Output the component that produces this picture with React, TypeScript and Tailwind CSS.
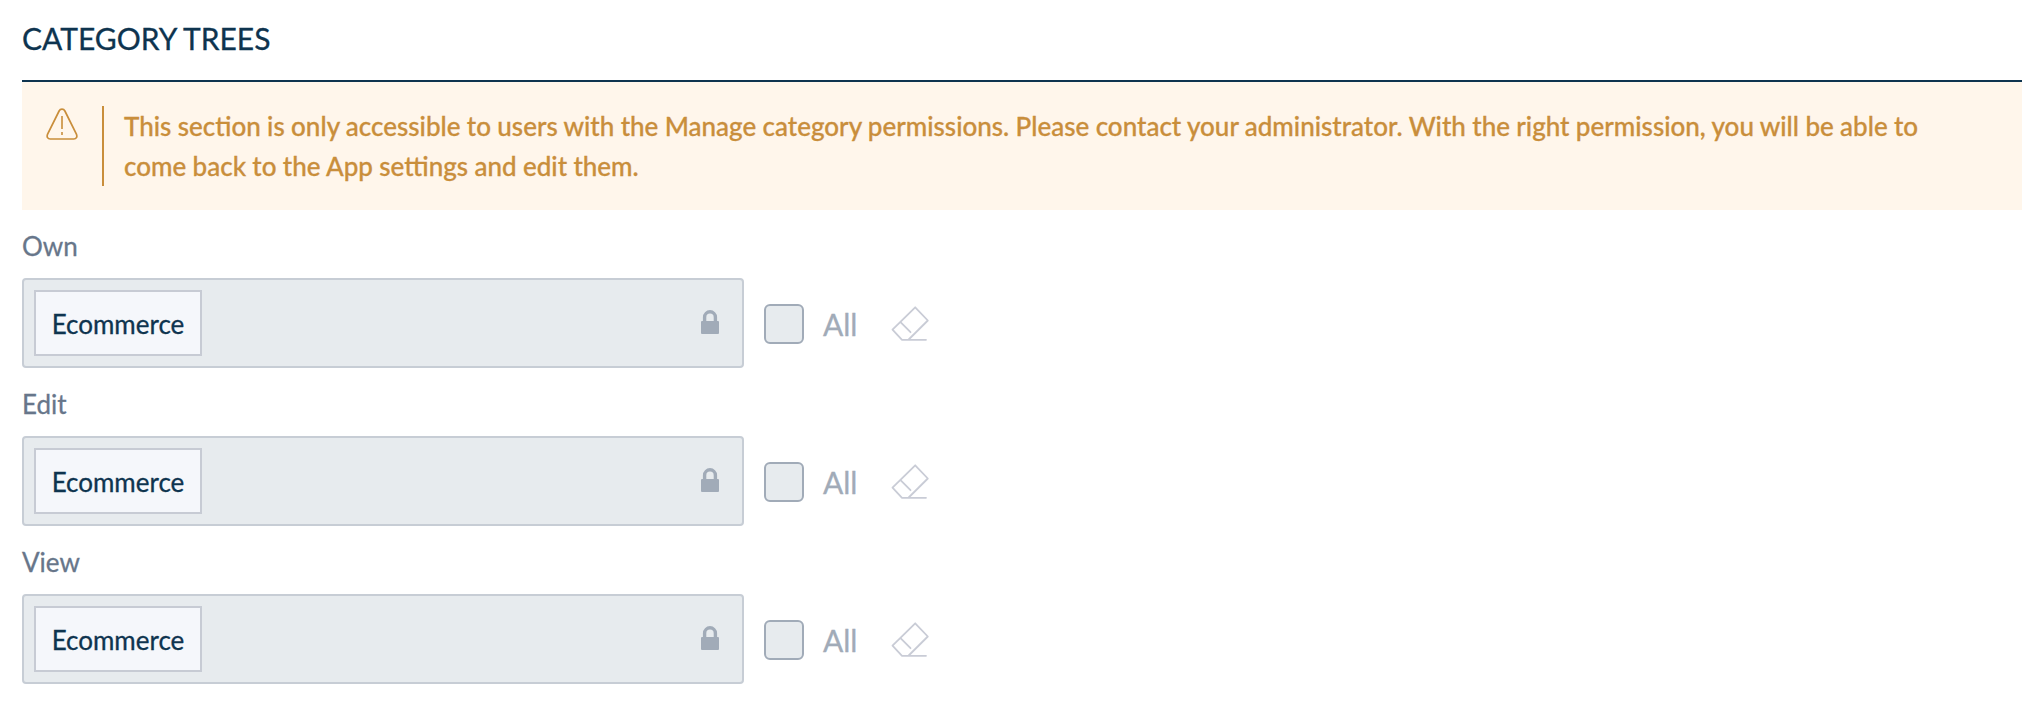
const LockIcon = () => (
  <svg width="18" height="24" viewBox="0 0 18 24" className="mr-[23px] mb-[2px] shrink-0">
    <rect x="0" y="11" width="18" height="13" rx="1" fill="#a1abb8" />
    <path d="M3.6 11.5V7.2a5.4 5.4 0 0 1 10.8 0v4.3" fill="none" stroke="#a1abb8" strokeWidth="3.4" />
  </svg>
);

const EraserIcon = () => (
  <svg width="40" height="40" viewBox="0 0 40 40" fill="none" stroke="#c9ccd6" strokeWidth="1.8" strokeLinecap="round" strokeLinejoin="round" className="ml-[33px] mt-[2px] shrink-0">
    <path d="M12 35.8 2.5 25.7 25.2 3.3 37.8 16.5 18.7 35.5M10.5 18.2 20.5 28.2M12 35.8h24" />
  </svg>
);

const WarningIcon = () => (
  <svg width="32" height="32" viewBox="0 0 32 32" fill="none" stroke="#c98e3b" strokeWidth="1.7" className="ml-[24px] mt-[2px] shrink-0">
    <path d="M13.1 3 1.6 26.2C.4 29 1.8 31 4.2 31h23.6c2.4 0 3.8-2 2.6-4.8L18.9 3c-1.3-2.6-4.5-2.6-5.8 0Z" />
    <path d="M16 8v13M16 24v3" strokeWidth="1.6" />
  </svg>
);

const Permission = ({ label }: { label: string }) => (
  <div className="h-[158px]">
    <div className="h-[68px] pt-[16px] text-[26px] leading-[40px] text-[#67768a]">{label}</div>
    <div className="flex h-[90px] items-center">
      <div className="flex h-[90px] w-[722px] items-center justify-between rounded-[4px] border-2 border-[#c7cdd5] bg-[#e7ebee] pl-[10px]">
        <div className="flex h-[66px] w-[168px] items-center justify-center border-2 border-[#c7cbd4] bg-[#f5f7fb] pt-[2px] text-[26px] leading-[40px] text-[#0e344f]">
          Ecommerce
        </div>
        <LockIcon />
      </div>
      <div className="ml-[20px] mt-[2px] h-[40px] w-[40px] rounded-[6px] border-2 border-[#a1abb8] bg-[#e7ebee]" />
      <div className="ml-[19px] mt-[2px] text-[30px] leading-[40px] text-[#a1abb8]">All</div>
      <EraserIcon />
    </div>
  </div>
);

export default function App() {
  return (
    <main className="h-[702px] w-[2028px] overflow-hidden bg-white pl-[22px] pr-[6px] font-['Lato',sans-serif] [-webkit-text-stroke:0.3px]">
      <h1 className="h-[82px] border-b-2 border-[#0e344f] pt-[18px] text-[30px] leading-[40px] text-[#0e344f]">
        CATEGORY TREES
      </h1>
      <div className="flex h-[128px] items-start bg-[#fff6eb] pt-[24px]">
        <WarningIcon />
        <p className="ml-[24px] h-[80px] w-[1840px] border-l-2 border-[#c98e3b] pl-[20px] text-[26px] font-medium leading-[40px] text-[#c98e3b] [word-spacing:-0.22px]">
          This section is only accessible to users with the Manage category permissions. Please contact your administrator. With the right permission, you will be able to come back to the App settings and edit them.
        </p>
      </div>
      <Permission label="Own" />
      <Permission label="Edit" />
      <Permission label="View" />
    </main>
  );
}
